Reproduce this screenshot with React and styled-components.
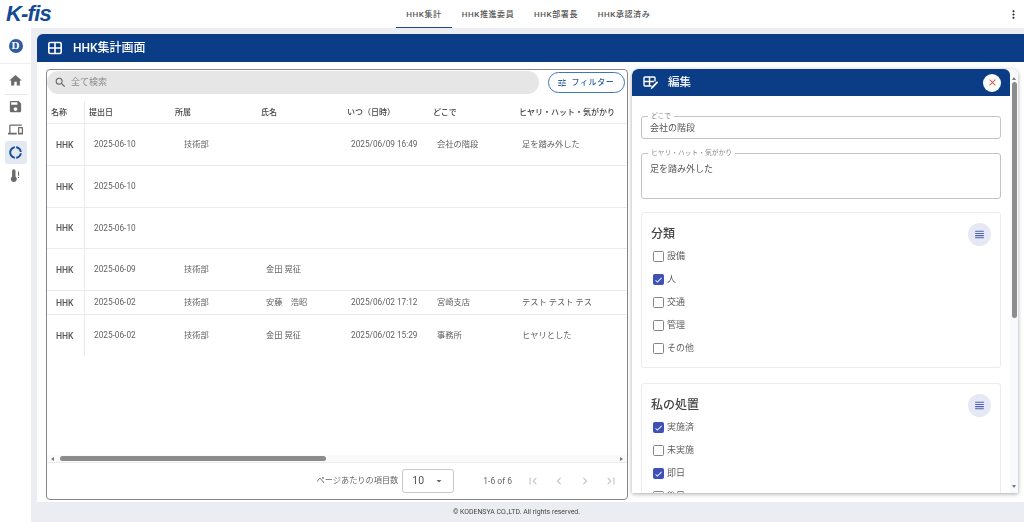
import React from 'react';
import styled, { createGlobalStyle } from 'styled-components';
import {
  MdArrowDropDown,
  MdCheck,
  MdChevronLeft,
  MdChevronRight,
  MdClose,
  MdDevices,
  MdDonutLarge,
  MdFirstPage,
  MdHome,
  MdLastPage,
  MdMoreVert,
  MdSave,
  MdSearch,
  MdTune,
  MdViewHeadline,
} from 'react-icons/md';

const BLUE = '#0a3d85';
const FONT = `Roboto, "Noto Sans CJK JP", sans-serif`;

const GlobalStyle = createGlobalStyle`
  html, body {
    margin: 0;
    height: 522px;
    overflow: hidden;
    background: #ecedf3;
    font-family: ${FONT};
    line-height: 1.2;
    color: #555;
  }
  * { box-sizing: border-box; }
`;

const Page = styled.div`
  width: 1024px;
  height: 522px;
  display: flex;
  flex-direction: column;
  will-change: opacity;
`;

const TopBar = styled.header`
  height: 28px;
  flex: none;
  background: #fff;
  display: grid;
  grid-template-columns: 390px auto 1fr;
  align-items: center;
  padding: 0 4px 0 6px;
`;

const Logo = styled.div`
  font: italic 700 22px/28px "Liberation Sans", sans-serif;
  letter-spacing: -0.8px;
  color: #124a94;
`;

const Tabs = styled.nav`
  display: flex;
  height: 28px;
`;

const Tab = styled.div`
  width: ${p => p.$w}px;
  display: flex;
  align-items: center;
  justify-content: center;
  padding-top: 2px;
  font-size: 8px;
  font-weight: 500;
  letter-spacing: 0.6px;
  color: #555;
  border-bottom: 1px solid ${p => (p.$active ? '#1b4a8c' : 'transparent')};
`;

const MoreButton = styled.div`
  justify-self: end;
  display: flex;
  font-size: 13px;
  color: #333;
`;

const Body = styled.div`
  flex: 1;
  display: flex;
  min-height: 0;
`;

const Sidebar = styled.aside`
  width: 31px;
  flex: none;
  background: #fff;
  display: flex;
  flex-direction: column;
  align-items: center;
`;

const BrandSlot = styled.div`
  height: 36px;
  width: 100%;
  display: flex;
  align-items: center;
  justify-content: center;
  border-bottom: 1px solid #eceef2;
`;

const BrandMark = styled.div`
  width: 14px;
  height: 14px;
  border-radius: 50%;
  background: #2f5d9f;
  display: flex;
  align-items: center;
  justify-content: center;
  color: #fff;
  font: 700 11px/1 "Liberation Serif", serif;
`;

const NavItem = styled.div`
  width: 22px;
  height: 23px;
  display: flex;
  align-items: center;
  justify-content: center;
  border-radius: 3px;
  font-size: 15px;
  color: ${p => (p.$active ? '#184f96' : '#6b6b6b')};
  background: ${p => (p.$active ? '#e3e8f3' : 'transparent')};
`;

const NavRule = styled.div`
  width: 22px;
  height: 1px;
  background: #e6e6e6;
  margin-top: 2px;
`;

const NavList = styled.div`
  display: flex;
  flex-direction: column;
  align-items: center;
  padding-top: 5px;
`;

const Content = styled.main`
  flex: 1;
  min-width: 0;
  display: flex;
  flex-direction: column;
  padding: 6px 0 0 6px;
`;

const TitleBar = styled.div`
  height: 28px;
  flex: none;
  background: ${BLUE};
  border-radius: 6px 0 0 0;
  display: flex;
  align-items: center;
  gap: 11px;
  padding-left: 11px;
  color: #fff;
  font-size: 12px;
  font-weight: 500;
`;

const Workspace = styled.div`
  height: 440px;
  flex: none;
  background: #fff;
  display: flex;
  align-items: flex-start;
  gap: 4px;
  padding: 7px 6px 0 9px;
`;

const ListPanel = styled.section`
  width: 582px;
  height: 431px;
  flex: none;
  border: 1px solid #888;
  border-radius: 4px;
  display: flex;
  flex-direction: column;
`;

const SearchRow = styled.div`
  display: flex;
  align-items: flex-start;
  gap: 9px;
  height: 31px;
  padding: 1px 2px 0 0;
`;

const SearchBox = styled.div`
  flex: 1;
  height: 23px;
  background: #e6e6e6;
  border-radius: 12px;
  display: flex;
  align-items: center;
  gap: 4px;
  padding-left: 7px;
  font-size: 9px;
  color: #8a8a8a;
  svg { font-size: 13px; color: #666; }
`;

const FilterButton = styled.div`
  width: 77px;
  height: 21px;
  margin-top: 1px;
  padding-right: 2px;
  border: 1px solid #3f76b5;
  border-radius: 11px;
  display: flex;
  align-items: center;
  justify-content: center;
  gap: 5px;
  font-size: 8px;
  font-weight: 500;
  letter-spacing: 0.6px;
  color: #2d5e9c;
  svg { font-size: 10px; }
`;

const TableArea = styled.div`
  flex: 1;
  min-height: 0;
`;

const Row = styled.div`
  display: grid;
  grid-template-columns: 38px repeat(5, 86px) 1fr;
  height: ${p => p.$h}px;
  border-bottom: ${p => (p.$last ? 'none' : '1px solid #ebebeb')};
`;

const HeadCell = styled.div`
  display: flex;
  align-items: center;
  font-size: 8px;
  font-weight: 500;
  color: #444;
  padding: 1px 0 0 4px;
  ${p => p.$divider && 'border-right: 1px solid #ebebeb;'}
`;

const Cell = styled.div`
  display: flex;
  align-items: center;
  font-size: 8.25px;
  color: #5f5f5f;
  white-space: nowrap;
  overflow: hidden;
  padding-top: 1px;
  padding-left: ${p => p.$pad}px;
  ${p => p.$divider && 'border-right: 1px solid #ebebeb;'}
  ${p => p.$strong && 'font-size: 8.5px; font-weight: 500; color: #555;'}
`;

const HScroll = styled.div`
  height: 8px;
  flex: none;
  display: flex;
  align-items: center;
  justify-content: space-between;
  padding: 0 4px;
  background: #fafafb;
  border-bottom: 1px solid #ececec;
`;

const Arrow = styled.span`
  width: 0;
  height: 0;
  border-top: 2.5px solid transparent;
  border-bottom: 2.5px solid transparent;
  ${p => (p.$dir === 'left' ? 'border-right: 3px solid #777;' : 'border-left: 3px solid #777;')}
`;

const ScrollTrack = styled.div`
  flex: 1;
  height: 5px;
  margin: 0 6px;
`;

const ScrollThumb = styled.div`
  width: 266px;
  height: 5px;
  background: #8c8c8c;
  border-radius: 3px;
`;

const Pager = styled.div`
  height: 36px;
  flex: none;
  display: flex;
  align-items: center;
  justify-content: flex-end;
  padding-right: 3px;
  font-size: 8.2px;
  color: #666;
`;

const PageSize = styled.div`
  width: 52px;
  height: 24px;
  margin: 0 29px 0 4px;
  border: 1px solid #c9c9c9;
  border-radius: 3px;
  display: flex;
  align-items: center;
  justify-content: space-between;
  padding: 0 8px 0 9px;
  font-size: 10.5px;
  color: #555;
  svg { font-size: 12px; color: #666; }
`;

const PagerRange = styled.span`
  font-size: 8.5px;
  margin-right: 8px;
`;

const PagerIcon = styled.div`
  width: 26px;
  display: flex;
  justify-content: center;
  font-size: 14px;
  color: #c4c4c4;
`;

const EditPanel = styled.section`
  width: 386px;
  height: 424px;
  flex: none;
  display: flex;
  border-radius: 6px 6px 0 0;
  box-shadow: 0 1px 4px rgba(0, 0, 0, 0.35);
  background: #fff;
  overflow: hidden;
`;

const EditMain = styled.div`
  width: 378px;
  flex: none;
  display: flex;
  flex-direction: column;
  min-height: 0;
`;

const EditHeader = styled.div`
  height: 27px;
  flex: none;
  background: ${BLUE};
  border-radius: 6px 6px 0 0;
  display: flex;
  align-items: center;
  gap: 9px;
  padding: 0 9px 0 11px;
  color: #fff;
  font-size: 11.5px;
  font-weight: 500;
`;

const CloseButton = styled.div`
  width: 18px;
  height: 18px;
  margin-left: auto;
  border-radius: 50%;
  background: #fff;
  display: flex;
  align-items: center;
  justify-content: center;
  color: #d9534f;
  font-size: 11px;
`;

const EditBody = styled.div`
  flex: 1;
  min-height: 0;
  overflow: hidden;
  display: flex;
  flex-direction: column;
  padding: 20px 9px 0;
`;

const Field = styled.div`
  position: relative;
  flex: none;
  height: ${p => p.$h}px;
  margin-bottom: ${p => p.$mb}px;
  border: 1px solid #c4c4c4;
  border-radius: 3px;
  padding: ${p => p.$pt}px 8px 0;
  font-size: 9px;
  line-height: 12px;
  color: #555;
`;

const FieldLabel = styled.span`
  position: absolute;
  top: -5px;
  left: 6px;
  padding: 0 3px;
  background: #fff;
  font-size: 6.75px;
  line-height: 8px;
  color: #8a8a8a;
`;

const Card = styled.div`
  position: relative;
  flex: none;
  height: ${p => p.$h}px;
  margin-bottom: 15px;
  border: 1px solid #ececec;
  border-radius: 3px;
  padding: 13px 9px 0;
`;

const CardTitle = styled.div`
  font-size: 12px;
  line-height: 16px;
  font-weight: 500;
  color: #444;
  margin-bottom: 3px;
`;

const ListButton = styled.div`
  position: absolute;
  top: 10px;
  right: 9px;
  width: 23px;
  height: 23px;
  border-radius: 50%;
  background: #e6e9f5;
  display: flex;
  align-items: center;
  justify-content: center;
  color: #4a5fa8;
  font-size: 13px;
`;

const CheckRow = styled.div`
  height: 23px;
  display: flex;
  align-items: center;
  gap: 3px;
  padding-left: 2px;
  font-size: 9px;
  color: #5f5f5f;
`;

const Box = styled.span`
  width: 11px;
  height: 11px;
  flex: none;
  border-radius: 1.5px;
  display: flex;
  align-items: center;
  justify-content: center;
  color: #fff;
  font-size: 10px;
  background: ${p => (p.$on ? '#3f51b5' : '#fff')};
  border: 1.2px solid ${p => (p.$on ? '#3f51b5' : '#858585')};
`;

const VScroll = styled.div`
  flex: 1;
  background: #f8f9fd;
  display: flex;
  flex-direction: column;
  align-items: center;
  padding: 8px 0 5px;
`;

const VThumb = styled.div`
  width: 5px;
  height: 236px;
  margin-top: 2px;
  border-radius: 3px;
  background: #8c8c8c;
`;

const VArrow = styled.span`
  width: 0;
  height: 0;
  border-left: 2.5px solid transparent;
  border-right: 2.5px solid transparent;
  ${p => (p.$dir === 'up' ? 'border-bottom: 3px solid #777;' : 'border-top: 3px solid #777; margin-top: auto;')}
`;

const Footer = styled.footer`
  flex: 1;
  display: flex;
  align-items: center;
  justify-content: center;
  padding-right: 28px;
  font-size: 6.9px;
  color: #444;
`;

const GridIcon = () => (
  <svg width="14" height="14" viewBox="0 0 14 14" fill="none" stroke="#fff" strokeWidth="1.6">
    <rect x="0.8" y="1.5" width="12.4" height="11" rx="1.5" />
    <path d="M0.8 7h12.4M7 1.5v11" />
  </svg>
);

const EditTableIcon = () => (
  <svg width="16" height="14" viewBox="0 0 16 14" fill="none" stroke="#fff" strokeWidth="1.4">
    <path d="M8.5 10H2a1 1 0 0 1-1-1V2a1 1 0 0 1 1-1h9a1 1 0 0 1 1 1v3.5" />
    <path d="M1 5.5h10M6.5 1v9" />
    <path d="M7.5 13.5l1-2.8L14 5.2l1.2 1.2-5.2 5.7z" fill="#fff" stroke="none" />
  </svg>
);

const ThermoAlertIcon = () => (
  <svg width="15" height="15" viewBox="0 0 15 15" fill="currentColor">
    <path d="M7.5 8.5V3a1.7 1.7 0 0 0-3.4 0v5.5a3 3 0 1 0 3.4 0z" />
    <path d="M10 3.5h1.1v4.2H10zM10 8.8h1.1V10H10z" />
  </svg>
);

const tabs = [
  { label: 'HHK集計', w: 56, active: true },
  { label: 'HHK推進委員', w: 72 },
  { label: 'HHK部署長', w: 64 },
  { label: 'HHK承認済み', w: 72 },
];

const columns = ['名称', '提出日', '所属', '氏名', 'いつ（日時）', 'どこで', 'ヒヤリ・ハット・気がかり'];

const rows = [
  { h: 42, date: '2025-06-10', dept: '技術部', name: '', when: '2025/06/09 16:49', where: '会社の階段', what: '足を踏み外した' },
  { h: 42, date: '2025-06-10', dept: '', name: '', when: '', where: '', what: '' },
  { h: 41, date: '2025-06-10', dept: '', name: '', when: '', where: '', what: '' },
  { h: 42, date: '2025-06-09', dept: '技術部', name: '金田 晃征', when: '', where: '', what: '' },
  { h: 24, date: '2025-06-02', dept: '技術部', name: '安藤　浩昭', when: '2025/06/02 17:12', where: '宮崎支店', what: 'テスト テスト テス' },
  { h: 41, date: '2025-06-02', dept: '技術部', name: '金田 晃征', when: '2025/06/02 15:29', where: '事務所', what: 'ヒヤリとした', last: true },
];

const categories = [
  { label: '設備' },
  { label: '人', on: true },
  { label: '交通' },
  { label: '管理' },
  { label: 'その他' },
];

const actions = [
  { label: '実施済', on: true },
  { label: '未実施' },
  { label: '即日', on: true },
  { label: '後日' },
];

const CheckCard = ({ title, items, h }) => (
  <Card $h={h}>
    <CardTitle>{title}</CardTitle>
    <ListButton><MdViewHeadline /></ListButton>
    {items.map(item => (
      <CheckRow key={item.label}>
        <Box $on={item.on}>{item.on && <MdCheck />}</Box>
        {item.label}
      </CheckRow>
    ))}
  </Card>
);

export default function App() {
  return (
    <Page>
      <GlobalStyle />
      <TopBar>
        <Logo>K-fis</Logo>
        <Tabs>
          {tabs.map(tab => (
            <Tab key={tab.label} $w={tab.w} $active={tab.active}>{tab.label}</Tab>
          ))}
        </Tabs>
        <MoreButton><MdMoreVert /></MoreButton>
      </TopBar>
      <Body>
        <Sidebar>
          <BrandSlot><BrandMark>D</BrandMark></BrandSlot>
          <NavList>
            <NavItem><MdHome /></NavItem>
            <NavRule />
            <NavItem><MdSave /></NavItem>
            <NavItem><MdDevices /></NavItem>
            <NavItem $active><MdDonutLarge /></NavItem>
            <NavItem><ThermoAlertIcon /></NavItem>
          </NavList>
        </Sidebar>
        <Content>
          <TitleBar><GridIcon />HHK集計画面</TitleBar>
          <Workspace>
            <ListPanel>
              <SearchRow>
                <SearchBox><MdSearch />全て検索</SearchBox>
                <FilterButton><MdTune />フィルター</FilterButton>
              </SearchRow>
              <TableArea>
                <Row $h={23}>
                  {columns.map((col, i) => (
                    <HeadCell key={col} $divider={i === 0}>{col}</HeadCell>
                  ))}
                </Row>
                {rows.map((row, i) => (
                  <Row key={i} $h={row.h} $last={row.last}>
                    <Cell $pad={9} $strong $divider>HHK</Cell>
                    <Cell $pad={9}>{row.date}</Cell>
                    <Cell $pad={13}>{row.dept}</Cell>
                    <Cell $pad={9}>{row.name}</Cell>
                    <Cell $pad={8}>{row.when}</Cell>
                    <Cell $pad={8}>{row.where}</Cell>
                    <Cell $pad={7}>{row.what}</Cell>
                  </Row>
                ))}
              </TableArea>
              <HScroll>
                <Arrow $dir="left" />
                <ScrollTrack><ScrollThumb /></ScrollTrack>
                <Arrow $dir="right" />
              </HScroll>
              <Pager>
                ページあたりの項目数
                <PageSize>10<MdArrowDropDown /></PageSize>
                <PagerRange>1-6 of 6</PagerRange>
                <PagerIcon><MdFirstPage /></PagerIcon>
                <PagerIcon><MdChevronLeft /></PagerIcon>
                <PagerIcon><MdChevronRight /></PagerIcon>
                <PagerIcon><MdLastPage /></PagerIcon>
              </Pager>
            </ListPanel>
            <EditPanel>
              <EditMain>
                <EditHeader>
                  <EditTableIcon />
                  編集
                  <CloseButton><MdClose /></CloseButton>
                </EditHeader>
                <EditBody>
                  <Field $h={23} $mb={14} $pt={5}>
                    <FieldLabel>どこで</FieldLabel>
                    会社の階段
                  </Field>
                  <Field $h={46} $mb={13} $pt={9}>
                    <FieldLabel>ヒヤリ・ハット・気がかり</FieldLabel>
                    足を踏み外した
                  </Field>
                  <CheckCard title="分類" items={categories} h={156} />
                  <CheckCard title="私の処置" items={actions} h={156} />
                </EditBody>
              </EditMain>
              <VScroll>
                <VArrow $dir="up" />
                <VThumb />
                <VArrow $dir="down" />
              </VScroll>
            </EditPanel>
          </Workspace>
          <Footer>© KODENSYA CO.,LTD. All rights reserved.</Footer>
        </Content>
      </Body>
    </Page>
  );
}
